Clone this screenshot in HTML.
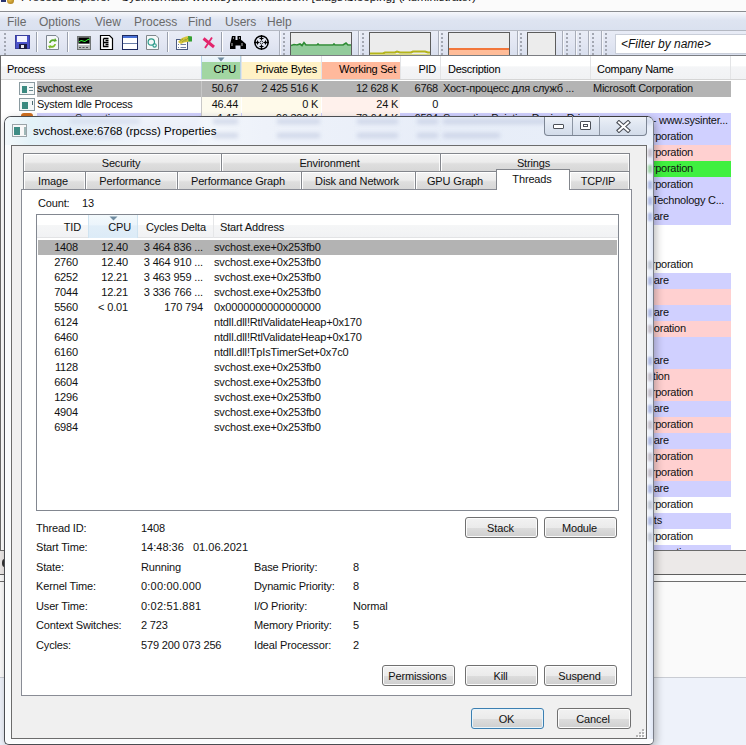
<!DOCTYPE html>
<html><head><meta charset="utf-8">
<style>
*{margin:0;padding:0;box-sizing:border-box}
html,body{width:746px;height:745px;overflow:hidden;background:#fff;font-family:"Liberation Sans",sans-serif;color:#000}
.a{position:absolute}
.t{position:absolute;white-space:nowrap;line-height:1}
/* background window */
#titlestrip{left:0;top:0;width:746px;height:11px;background:#fbfbfb}
#menubar{left:0;top:12px;width:746px;height:18px;background:linear-gradient(#f6f7fb 0,#e8ecf6 25%,#dee4f1 45%,#dae1ef 100%)}
#menubar .t{font-size:12px;color:#6a6a6a;top:4px}
#toolbar{left:0;top:30px;width:746px;height:25px;background:linear-gradient(#e9ecf6 0,#e3e7f3 50%,#d9dfee 100%)}
.grip{position:absolute;width:2px;top:3px;height:23px;background:repeating-linear-gradient(#a3a7b2 0 2px,transparent 2px 4px)}
.bl{position:absolute;width:1px;top:1px;height:24px;background:#a9aeba;box-shadow:1px 0 0 #f6f7fb}
.sep{position:absolute;width:1px;top:2px;height:20px;background:#9aa0ad;box-shadow:1px 0 0 #fff}
.graph{position:absolute;top:2px;height:24px;border:1px solid #6d6d6d;background:#ececec;overflow:hidden}
#hdr{left:0;top:56px;width:746px;height:24px;background:linear-gradient(#fff 0,#fff 45%,#f4f5f7 46%,#f1f2f4 100%);border-bottom:1px solid #d5d5d5}
#hdr .t{font-size:11px;top:7.6px;letter-spacing:-0.25px}
.hd{position:absolute;top:0;width:1px;height:23px;background:#e3e4e6}
.row{position:absolute;left:1px;height:16px;width:730px}
.row .t{font-size:10.5px;top:3px}
.mt{font-size:11px;color:#111;letter-spacing:-0.25px;margin-top:-0.4px}

.dt{position:absolute;white-space:nowrap;line-height:1;font-size:11px;color:#111;letter-spacing:-0.15px}
.tab{position:absolute;border:1px solid #83868c;border-bottom:none;background:linear-gradient(#f4f4f4 0,#ececec 45%,#dedede 55%,#d6d6d6 100%);box-shadow:inset 1px 1px 0 #fff,inset -1px 0 0 #fafafa}
.tab .dt{top:4px;left:0;right:3px;text-align:center}
.btn{position:absolute;height:21px;border:1px solid #707070;border-radius:3px;background:linear-gradient(#f2f2f2 0,#ebebeb 50%,#dddddd 51%,#cfcfcf 100%);box-shadow:inset 0 0 0 1px #fcfcfc}
.btn .dt{top:5px;left:0;right:2px;text-align:center}
.lr{position:absolute;left:37px;width:581px;height:15px}
.lr .dt{top:2px}
</style></head><body>
<div class="a" style="left:0;top:0;width:746px;height:745px;background:#fff"></div>
<div id="titlestrip" class="a"></div><div class="a" style="left:1px;top:0;width:5px;height:2px;background:#2a3570"></div><div class="a" style="left:7px;top:-3px;width:7px;height:7px;border-radius:50%;background:radial-gradient(circle at 40% 40%,#e8c050,#a07010)"></div>
<div class="t" style="left:21px;top:-8px;font-size:11.8px;color:#111">Process Explorer - Sysinternals: www.sysinternals.com [diags\Sleeping] (Administrator)</div>
<div class="a" style="left:0;top:11px;width:746px;height:1px;background:#8a8c90"></div>
<div id="menubar" class="a">
 <div class="t" style="left:7px">File</div>
 <div class="t" style="left:39px">Options</div>
 <div class="t" style="left:95px">View</div>
 <div class="t" style="left:134px">Process</div>
 <div class="t" style="left:188px">Find</div>
 <div class="t" style="left:225px">Users</div>
 <div class="t" style="left:267px">Help</div>
</div>
<div id="toolbar" class="a">
 <div class="grip" style="left:4px"></div>
 <div class="sep" style="left:36px"></div>
 <div class="sep" style="left:67px"></div>
 <div class="sep" style="left:167px"></div>
 <div class="sep" style="left:221px"></div>
 <div class="bl" style="left:279px"></div><div class="grip" style="left:283px"></div>
 <div class="graph" style="left:290px;width:62px;border-color:#5c5c5c"><svg class="a" style="left:0;top:0" width="60" height="22"><path d="M0 13 L3 12 L6 12.5 L9 11.5 L11 13 L13 10 L15 12.5 L26 12.5 L27 11.5 L28 12.5 L42 12.5 L43 11.5 L44 12.5 L52 12.5 L55 10.5 L57 12.5 L60 12.5 V22 H0 Z" fill="#93cb9b"/><path d="M0 12.5 L3 11.5 L6 12 L9 11 L11 12.5 L13 9.5 L15 12 L26 12 L27 11 L28 12 L42 12 L43 11 L44 12 L52 12 L55 10 L57 12 L60 12" fill="none" stroke="#2c8a32" stroke-width="1.6"/></svg></div>
 <div class="bl" style="left:358px"></div><div class="grip" style="left:362px"></div>
 <div class="graph" style="left:369px;width:62px;border-color:#5c5c5c"><svg class="a" style="left:0;top:0" width="60" height="22"><path d="M0 20.5 L13 20.5 L15 19.5 L25 19.5 L27 18.5 L30 19.5 L41 19.5 L43 18.5 L55 18.5 L58 19.5 L60 19.5" fill="none" stroke="#b4b41a" stroke-width="2"/><path d="M0 21.5 H60" stroke="#d8d880" stroke-width="1"/></svg></div>
 <div class="bl" style="left:438px"></div><div class="grip" style="left:441px"></div>
 <div class="graph" style="left:448px;width:62px;border-color:#5c5c5c"><div class="a" style="left:0;top:15px;width:60px;height:2px;background:#f2763a"></div><div class="a" style="left:0;top:17px;width:60px;height:6px;background:#ffbc98"></div></div>
 <div class="bl" style="left:517px"></div><div class="grip" style="left:520px"></div>
 <div class="graph" style="left:527px;width:29px;border-color:#5c5c5c"></div>
 <div class="bl" style="left:562px"></div><div class="grip" style="left:566px"></div>
 <div class="bl" style="left:575px"></div><div class="grip" style="left:579px"></div>
 <div class="bl" style="left:588px"></div><div class="grip" style="left:592px"></div>
 <div class="bl" style="left:601px"></div><div class="grip" style="left:605px"></div>
 <div class="a" style="left:615px;top:4px;width:140px;height:20px;background:#fff;border:1px solid #c9ced9"></div>
 <div class="t" style="left:621px;top:8px;font-size:12px;font-style:italic;color:#111">&lt;Filter by name&gt;</div>
</div>
<svg class="a" style="left:0;top:30px" width="290" height="25" viewBox="0 30 290 25">
 <!-- floppy -->
 <rect x="15" y="35" width="15" height="14" fill="#4b52c9"/>
 <rect x="15.5" y="35.5" width="14" height="13" fill="none" stroke="#3a3f9a" stroke-width="1"/>
 <rect x="17" y="36" width="10" height="6" fill="#f4f4ff"/>
 <rect x="19" y="44" width="8" height="5" fill="#1c1c40"/>
 <rect x="21" y="45" width="3" height="3" fill="#e8e8f0"/>
 <!-- refresh page -->
 <path d="M46.5 35.5 H56 L58.5 38 V49.5 H46.5 Z" fill="#f6f8fa" stroke="#7d8590"/>
 <path d="M49 43 Q50 38.5 54.5 39.5 L55 38 L57 41 L53.5 42 L54 41 Q51.5 40.5 50.5 43 Z" fill="#57a82a"/>
 <path d="M56 44 Q55 48.5 50.5 47.5 L50 49 L48 46 L51.5 45 L51 46 Q53.5 46.5 54.5 44 Z" fill="#7cbc2a"/>
 <!-- cpu monitor -->
 <rect x="77.5" y="36.5" width="13" height="13" fill="#b8bcbc" stroke="#707474"/>
 <rect x="78.5" y="37.5" width="11" height="6" fill="#000"/>
 <path d="M79 42 Q81 39.5 83 41 T87 40 L89.5 39" fill="none" stroke="#30ff30" stroke-width="1"/>
 <rect x="78.5" y="44" width="11" height="1" fill="#fff"/>
 <path d="M79 47.5 H81 M82.5 47.5 H84.5 M86 47.5 H88" stroke="#555" stroke-width="1"/>
 <!-- doc tree -->
 <path d="M100.5 35.5 H109.5 L112.5 38.5 V49.5 H100.5 Z" fill="#fff" stroke="#000" stroke-width="1.2"/>
 <path d="M103.5 38.5 H108.5 M103.5 38.5 V46.5 H108.5 M103.5 42.5 H108.5 M105.5 40.5 H108.5 M105.5 44.5 H108.5" fill="none" stroke="#000" stroke-width="1.3"/>
 <!-- window -->
 <rect x="122.5" y="35.5" width="15" height="14" fill="#fff" stroke="#1e2a60"/>
 <rect x="123" y="36" width="14" height="2" fill="#4a72d8"/>
 <path d="M123 43.5 H137" stroke="#6a7ea8" stroke-width="1"/>
 <!-- dll page -->
 <path d="M146.5 35.5 H156 L158.5 38 V49.5 H146.5 Z" fill="#f6f8f8" stroke="#80868c"/>
 <circle cx="151.3" cy="42" r="3.2" fill="none" stroke="#2b9a8a" stroke-width="1.2"/>
 <circle cx="154.6" cy="45.4" r="1.7" fill="none" stroke="#2b9a8a" stroke-width="1.1"/>
 <!-- properties -->
 <rect x="176.5" y="39.5" width="11" height="10" fill="#fdfdfd" stroke="#4a5a80"/>
 <path d="M178 44.5 H179 M180.5 44.5 H186 M178 47.5 H179 M180.5 47.5 H186" stroke="#7080a0" stroke-width="1"/>
 <path d="M178 42 L182 38 L186 36.5 L189 36 L191.5 37 L191 41 L187 42 L184 42.5 L181 44 Z" fill="#d6c43a"/>
 <path d="M180 41 L183 39 M182 42 L186 39 M185 41.5 L188 38" stroke="#8a9a30" stroke-width="0.8"/>
 <path d="M188 36 L192 36.5 L192 41.5 L188.5 41.5 Z" fill="#34a034"/>
 <!-- kill -->
 <path d="M203.5 38.5 L214 47" stroke="#e3246c" stroke-width="3"/>
 <path d="M212 37.5 L205 48" stroke="#e3246c" stroke-width="1.8"/>
 <!-- binoculars -->
 <path d="M232 36 H235.5 V40 H237.5 V36 H241 V40 L242 40.5 L246 44 V49 H240.5 V45.5 H235.5 V49 H230 V44 L231 40.5 Z" fill="#000"/>
 <rect x="231.5" y="43" width="1" height="3" fill="#bbb"/><rect x="241.5" y="43" width="1" height="3" fill="#bbb"/><rect x="233" y="37" width="1" height="2" fill="#888"/><rect x="239" y="37" width="1" height="2" fill="#888"/>
 <!-- crosshair -->
 <circle cx="261.5" cy="42.5" r="6.6" fill="none" stroke="#000" stroke-width="1.5"/>
 <path d="M261.5 35 V40 M261.5 45 V50 M254 42.5 H259 M264 42.5 H269" stroke="#000" stroke-width="1.3"/>
 <path d="M259.5 38.5 H263.5 M259.5 46.5 H263.5 M257.5 40.5 V44.5 M265.5 40.5 V44.5" stroke="#000" stroke-width="1"/>
 <rect x="260.2" y="41.2" width="2.6" height="2.6" fill="none" stroke="#000" stroke-width="0.8" transform="rotate(45 261.5 42.5)"/>
</svg>
<div class="a" style="left:0;top:55px;width:746px;height:1px;background:#7b7d82"></div><div class="a" style="left:0;top:30px;width:746px;height:1px;background:#b4b8c2"></div>
<div id="hdr" class="a">
 <div class="a" style="left:202px;top:6px;width:38px;height:17px;background:#a2d6a2"></div>
 <div class="a" style="left:201px;top:0;width:1px;height:23px;background:#b5d3e6"></div>
 <div class="a" style="left:240px;top:0;width:1px;height:23px;background:#b5d3e6"></div>
 <div class="a" style="left:202px;top:0;width:38px;height:6px;background:linear-gradient(#f2f8fc,#e6f2fa)"></div>
 <svg class="a" style="left:217px;top:1px" width="8" height="5"><path d="M0.5 0.5 L7.5 0.5 L4 4.5 Z" fill="#6f8ba0"/></svg>
 <div class="a" style="left:242px;top:6px;width:79px;height:17px;background:#fff2c6"></div>
 <div class="a" style="left:322px;top:6px;width:78px;height:17px;background:#ffb99c"></div>
 <div class="hd" style="left:241px"></div>
 <div class="hd" style="left:321px"></div>
 <div class="hd" style="left:400px"></div>
 <div class="hd" style="left:440px"></div>
 <div class="hd" style="left:590px"></div>
 <div class="hd" style="left:730px"></div>
 <div class="t" style="left:7px">Process</div>
 <div class="t" style="right:510px">CPU</div>
 <div class="t" style="right:429px">Private Bytes</div>
 <div class="t" style="right:350px">Working Set</div>
 <div class="t" style="right:310px">PID</div>
 <div class="t" style="left:448px">Description</div>
 <div class="t" style="left:597px">Company Name</div>
</div>

<div id="rows"><div class="a" style="left:37px;top:81px;width:694px;height:16px;background:#b4b4b4"></div><div class="a" style="left:37px;top:113px;width:694px;height:16px;background:#d0d0ff"></div><div class="a" style="left:37px;top:129px;width:694px;height:16px;background:#d0d0ff"></div><div class="a" style="left:37px;top:145px;width:694px;height:16px;background:#ffd0d0"></div><div class="a" style="left:37px;top:161px;width:694px;height:16px;background:#40f040"></div><div class="a" style="left:37px;top:177px;width:694px;height:16px;background:#d0d0ff"></div><div class="a" style="left:37px;top:193px;width:694px;height:16px;background:#d0d0ff"></div><div class="a" style="left:37px;top:209px;width:694px;height:16px;background:#d0d0ff"></div><div class="a" style="left:37px;top:273px;width:694px;height:16px;background:#d0d0ff"></div><div class="a" style="left:37px;top:289px;width:694px;height:16px;background:#ffd0d0"></div><div class="a" style="left:37px;top:305px;width:694px;height:16px;background:#d0d0ff"></div><div class="a" style="left:37px;top:321px;width:694px;height:16px;background:#ffd0d0"></div><div class="a" style="left:37px;top:337px;width:694px;height:16px;background:#d0d0ff"></div><div class="a" style="left:37px;top:353px;width:694px;height:16px;background:#d0d0ff"></div><div class="a" style="left:37px;top:369px;width:694px;height:16px;background:#ffd0d0"></div><div class="a" style="left:37px;top:385px;width:694px;height:16px;background:#ffd0d0"></div><div class="a" style="left:37px;top:401px;width:694px;height:16px;background:#d0d0ff"></div><div class="a" style="left:37px;top:417px;width:694px;height:16px;background:#ffd0d0"></div><div class="a" style="left:37px;top:433px;width:694px;height:16px;background:#d0d0ff"></div><div class="a" style="left:37px;top:449px;width:694px;height:16px;background:#ffd0d0"></div><div class="a" style="left:37px;top:465px;width:694px;height:16px;background:#ffd0d0"></div><div class="a" style="left:37px;top:481px;width:694px;height:16px;background:#d0d0ff"></div><div class="a" style="left:37px;top:513px;width:694px;height:16px;background:#d0d0ff"></div><div class="a" style="left:37px;top:545px;width:694px;height:5px;background:#d0d0ff"></div>
<div class="a" style="left:202px;top:97px;width:39px;height:16px;background:#fdfbee"></div>
<div class="a" style="left:242px;top:97px;width:79px;height:16px;background:#fffaea"></div>
<div class="a" style="left:322px;top:97px;width:78px;height:16px;background:#fff1ec"></div>
<div class="a" style="left:202px;top:113px;width:39px;height:4px;background:#fbfaf2"></div><div class="a" style="left:242px;top:113px;width:79px;height:4px;background:#fffaf0"></div><div class="a" style="left:322px;top:113px;width:78px;height:4px;background:#fff4f0"></div><div class="a" style="left:201px;top:81px;width:1px;height:469px;background:#c8c8c8"></div>

<div class="a" style="left:19px;top:82px;width:16px;height:13px;border:1px solid #8a9aa0;background:#f4f8f8"><div class="a" style="left:2px;top:3px;width:5px;height:7px;background:#3a8a80"></div><div class="a" style="left:9px;top:4px;width:4px;height:1px;background:#6a8a90"></div><div class="a" style="left:9px;top:7px;width:4px;height:1px;background:#6a8a90"></div></div>
<div class="a" style="left:19px;top:98px;width:16px;height:13px;border:1px solid #8a9aa0;background:#f4f8f8"><div class="a" style="left:2px;top:3px;width:6px;height:7px;background:#3a8a80"></div><div class="a" style="left:12px;top:2px;width:1px;height:4px;background:#4a6a70"></div></div>
<div class="t mt" style="left:37px;top:83px">svchost.exe</div><div class="t mt" style="right:508px;top:83px">50.67</div><div class="t mt" style="right:428px;top:83px">2 425 516 K</div><div class="t mt" style="right:348px;top:83px">12 628 K</div><div class="t mt" style="right:308px;top:83px">6768</div><div class="t mt" style="left:443px;top:83px">Хост-процесс для служб ...</div><div class="t mt" style="left:593px;top:83px">Microsoft Corporation</div><div class="t mt" style="left:37px;top:99px">System Idle Process</div><div class="t mt" style="right:508px;top:99px">46.44</div><div class="t mt" style="right:428px;top:99px">0 K</div><div class="t mt" style="right:348px;top:99px">24 K</div><div class="t mt" style="right:308px;top:99px">0</div><div class="t mt" style="left:593px;top:115px">Sysinternals - www.sysinter...</div><div class="t mt" style="left:593px;top:131px">Microsoft Corporation</div><div class="t mt" style="left:593px;top:147px">Microsoft Corporation</div><div class="t mt" style="left:593px;top:163px">Microsoft Corporation</div><div class="t mt" style="left:593px;top:179px">Microsoft Corporation</div><div class="t mt" style="left:652px;top:195px">Technology C...</div><div class="t mt" style="left:646px;top:211px">ware</div><div class="t mt" style="left:593px;top:259px">Microsoft Corporation</div><div class="t mt" style="left:646px;top:275px">ware</div><div class="t mt" style="left:646px;top:307px">ware</div><div class="t mt" style="left:648px;top:323px">poration</div><div class="t mt" style="left:646px;top:355px">ware</div><div class="t mt" style="left:647px;top:371px">ation</div><div class="t mt" style="left:593px;top:387px">Microsoft Corporation</div><div class="t mt" style="left:646px;top:403px">ware</div><div class="t mt" style="left:593px;top:419px">Microsoft Corporation</div><div class="t mt" style="left:646px;top:435px">ware</div><div class="t mt" style="left:593px;top:451px">Microsoft Corporation</div><div class="t mt" style="left:593px;top:467px">Microsoft Corporation</div><div class="t mt" style="left:646px;top:483px">ware</div><div class="t mt" style="left:593px;top:499px">Microsoft Corporation</div><div class="t mt" style="left:648px;top:515px">nts</div><div class="t mt" style="left:593px;top:531px">Microsoft Corporation</div><div class="t mt" style="left:593px;top:547px">Microsoft Corporation</div><div class="t mt" style="left:75px;top:113.5px">Synaptics</div><div class="t mt" style="right:508px;top:113.5px">1.15</div><div class="t mt" style="right:428px;top:113.5px">96 392 K</div><div class="t mt" style="right:348px;top:113.5px">73 644 K</div><div class="t mt" style="right:308px;top:113.5px">6584</div><div class="t mt" style="left:443px;top:113.5px">Synaptics Pointing Device Driver</div><div class="a" style="left:21px;top:113px;width:12px;height:4px;background:#d07020;border-radius:3px 3px 0 0"></div></div>

<div id="bgbottom">
<div class="a" style="left:0;top:550px;width:746px;height:1px;background:#6b6b6b"></div>
<div class="a" style="left:0;top:551px;width:746px;height:23px;background:#ece9e8"></div>
<div class="a" style="left:0;top:574px;width:746px;height:1px;background:#5e5e5e"></div>
<div class="a" style="left:0;top:575px;width:746px;height:6px;background:#fbfbfb"></div>
<div class="a" style="left:0;top:581px;width:746px;height:1px;background:#6e6e6e"></div>
<div class="a" style="left:0;top:582px;width:746px;height:95px;background:#fafafa"></div>
<div class="a" style="left:0;top:677px;width:746px;height:1px;background:#c9ccd3"></div>
<div class="a" style="left:0;top:678px;width:746px;height:67px;background:#eef2fa"></div>
<div class="a" style="left:0;top:56px;width:1px;height:494px;background:#6a6a6a"></div><div class="a" style="left:2px;top:559px;width:5px;height:8px;border-radius:50%;background:#333"></div>
</div>

<div id="dialog">
 <div class="a" style="left:4px;top:116px;width:650px;height:629px;border-radius:7px;box-shadow:2px 3px 9px rgba(0,0,0,.28)"></div>
 <div class="a" style="left:4px;top:116px;width:650px;height:629px;border:1px solid #4a4d52;border-right-color:#7a7e88;border-radius:7px 7px 5px 5px;background:#fafcfd;box-shadow:inset 1px 1px 0 #fff,inset -1px -1px 0 #fff"></div><div class="a" style="left:5px;top:117px;width:648px;height:28px;border-radius:6px 6px 0 0;background:linear-gradient(90deg,#f4f9fb 0,#e3f2f8 4%,#f6fafc 22%,#eef2fa 40%,#e7edf8 70%,#e9eff9 100%)"></div>
 <div class="a" style="left:213px;top:119px;width:25px;height:5px;background:#b8c2dc;filter:blur(2px);opacity:.55"></div><div class="a" style="left:277px;top:119px;width:43px;height:5px;background:#b8c2dc;filter:blur(2px);opacity:.55"></div><div class="a" style="left:357px;top:119px;width:41px;height:5px;background:#b8c2dc;filter:blur(2px);opacity:.55"></div><div class="a" style="left:417px;top:119px;width:21px;height:5px;background:#b8c2dc;filter:blur(2px);opacity:.55"></div><div class="a" style="left:443px;top:119px;width:117px;height:5px;background:#b8c2dc;filter:blur(2px);opacity:.55"></div><div class="a" style="left:593px;top:119px;width:60px;height:5px;background:#b8c2dc;filter:blur(2px);opacity:.55"></div><div class="a" style="left:213px;top:133px;width:25px;height:5px;background:#b8c2dc;filter:blur(2px);opacity:.55"></div><div class="a" style="left:277px;top:133px;width:43px;height:5px;background:#b8c2dc;filter:blur(2px);opacity:.55"></div><div class="a" style="left:357px;top:133px;width:41px;height:5px;background:#b8c2dc;filter:blur(2px);opacity:.55"></div><div class="a" style="left:417px;top:133px;width:21px;height:5px;background:#b8c2dc;filter:blur(2px);opacity:.55"></div><div class="a" style="left:443px;top:133px;width:57px;height:5px;background:#b8c2dc;filter:blur(2px);opacity:.55"></div><div class="a" style="left:70px;top:119px;width:70px;height:5px;background:#b8c2dc;filter:blur(2px);opacity:.5"></div><div class="a" style="left:70px;top:133px;width:50px;height:5px;background:#b8c2dc;filter:blur(2px);opacity:.5"></div><div class="a" style="left:40px;top:117px;width:160px;height:26px;background:#dfe3f6;filter:blur(3px);opacity:.35"></div><div class="a" style="left:12px;top:124px;width:15px;height:13px;border:1px solid #9aa4a8;background:#f8f8f8"><div class="a" style="left:1px;top:2px;width:6px;height:8px;background:#3f8d85"></div><div class="a" style="left:11px;top:2px;width:2px;height:8px;background:#9fb8b8"></div></div>
 <div class="t" style="left:33px;top:126px;font-size:11.5px;color:#000">svchost.exe:6768 (rpcss) Properties</div>
 <div class="a" style="left:544px;top:116px;width:103px;height:20px;border:1px solid #7c8594;border-top:none;border-radius:0 0 4px 4px;background:linear-gradient(#eef2f8 0,#dfe6f1 50%,#d3dcea 100%)"></div><div class="a" style="left:540px;top:116px;width:108px;height:1px;background:#3d3d3d"></div>
 <div class="a" style="left:572px;top:116px;width:1px;height:19px;background:#8b94a2"></div>
 <div class="a" style="left:599px;top:116px;width:1px;height:19px;background:#8b94a2"></div>
 <div class="a" style="left:553px;top:124px;width:11px;height:5px;border:1px solid #4c5058;background:#fff;border-radius:1px"></div>
 <div class="a" style="left:580px;top:121px;width:11px;height:9px;border:1px solid #4c5058;background:#fff;border-radius:1px"><div class="a" style="left:2px;top:2px;width:5px;height:3px;border:1px solid #4c5058"></div></div>
 <svg class="a" style="left:616px;top:120px" width="15" height="13"><path d="M3 2.5 L12 10.5 M12 2.5 L3 10.5" stroke="#4c5058" stroke-width="4.2" stroke-linecap="square"/><path d="M3 2.5 L12 10.5 M12 2.5 L3 10.5" stroke="#fff" stroke-width="2" stroke-linecap="square"/></svg>
 <div class="a" style="left:647px;top:145px;width:6px;height:594px;background:linear-gradient(90deg,#f6f8fc,#e8eef9 60%,#dfe6f4)"></div><div class="a" style="left:648px;top:149px;width:4px;height:8px;background:#a89aa6;filter:blur(1.2px);opacity:.55"></div><div class="a" style="left:648px;top:165px;width:4px;height:8px;background:#60c060;filter:blur(1.2px);opacity:.55"></div><div class="a" style="left:648px;top:181px;width:4px;height:8px;background:#7d8fd6;filter:blur(1.2px);opacity:.55"></div><div class="a" style="left:648px;top:197px;width:4px;height:8px;background:#7d8fd6;filter:blur(1.2px);opacity:.55"></div><div class="a" style="left:648px;top:213px;width:4px;height:8px;background:#7d8fd6;filter:blur(1.2px);opacity:.55"></div><div class="a" style="left:648px;top:261px;width:4px;height:8px;background:#a0a8b8;filter:blur(1.2px);opacity:.55"></div><div class="a" style="left:648px;top:277px;width:4px;height:8px;background:#7d8fd6;filter:blur(1.2px);opacity:.55"></div><div class="a" style="left:648px;top:309px;width:4px;height:8px;background:#7d8fd6;filter:blur(1.2px);opacity:.55"></div><div class="a" style="left:648px;top:325px;width:4px;height:8px;background:#a89aa6;filter:blur(1.2px);opacity:.55"></div><div class="a" style="left:648px;top:357px;width:4px;height:8px;background:#7d8fd6;filter:blur(1.2px);opacity:.55"></div><div class="a" style="left:648px;top:373px;width:4px;height:8px;background:#a89aa6;filter:blur(1.2px);opacity:.55"></div><div class="a" style="left:648px;top:389px;width:4px;height:8px;background:#a89aa6;filter:blur(1.2px);opacity:.55"></div><div class="a" style="left:648px;top:405px;width:4px;height:8px;background:#7d8fd6;filter:blur(1.2px);opacity:.55"></div><div class="a" style="left:648px;top:421px;width:4px;height:8px;background:#a89aa6;filter:blur(1.2px);opacity:.55"></div><div class="a" style="left:648px;top:437px;width:4px;height:8px;background:#7d8fd6;filter:blur(1.2px);opacity:.55"></div><div class="a" style="left:648px;top:453px;width:4px;height:8px;background:#a89aa6;filter:blur(1.2px);opacity:.55"></div><div class="a" style="left:648px;top:469px;width:4px;height:8px;background:#a89aa6;filter:blur(1.2px);opacity:.55"></div><div class="a" style="left:648px;top:485px;width:4px;height:8px;background:#7d8fd6;filter:blur(1.2px);opacity:.55"></div><div class="a" style="left:648px;top:501px;width:4px;height:8px;background:#a0a8b8;filter:blur(1.2px);opacity:.55"></div><div class="a" style="left:648px;top:517px;width:4px;height:8px;background:#7d8fd6;filter:blur(1.2px);opacity:.55"></div><div class="a" style="left:648px;top:533px;width:4px;height:8px;background:#a0a8b8;filter:blur(1.2px);opacity:.55"></div><!-- client area -->
 <div class="a" style="left:11px;top:145px;width:636px;height:594px;border:1px solid #6c6c6c;background:#f0f0f0"></div>
 <!-- tabs row 1 -->
 <div class="tab" style="left:23px;top:153px;width:199px;height:19px"><div class="dt">Security</div></div>
 <div class="tab" style="left:221px;top:153px;width:220px;height:19px"><div class="dt">Environment</div></div>
 <div class="tab" style="left:440px;top:153px;width:190px;height:19px"><div class="dt">Strings</div></div>
 <div class="a" style="left:23px;top:171px;width:607px;height:1px;background:#83868c"></div>
 <!-- tabs row 2 -->
 <div class="tab" style="left:23px;top:171px;width:63px;height:19px"><div class="dt">Image</div></div>
 <div class="tab" style="left:85px;top:171px;width:93px;height:19px"><div class="dt">Performance</div></div>
 <div class="tab" style="left:177px;top:171px;width:125px;height:19px"><div class="dt">Performance Graph</div></div>
 <div class="tab" style="left:301px;top:171px;width:115px;height:19px"><div class="dt">Disk and Network</div></div>
 <div class="tab" style="left:415px;top:171px;width:83px;height:19px"><div class="dt">GPU Graph</div></div>
 <div class="tab" style="left:569px;top:171px;width:61px;height:19px"><div class="dt">TCP/IP</div></div>
 <!-- panel -->
 <div class="a" style="left:21px;top:189px;width:611px;height:507px;border:1px solid #898c95;background:#fff"></div>
 <div class="a" style="left:496px;top:169px;width:74px;height:21px;border:1px solid #83868c;border-bottom:none;background:#fff"><div class="dt" style="top:4px;left:0;right:2px;text-align:center">Threads</div></div>
 <div class="dt" style="left:38px;top:198px">Count:</div>
 <div class="dt" style="left:82px;top:198px">13</div>
 <!-- listview -->
 <div class="a" style="left:36px;top:214px;width:583px;height:297px;border:1px solid #828790;background:#fff"></div>
 <div class="a" style="left:37px;top:215px;width:581px;height:23px;background:linear-gradient(#fff 0,#fff 45%,#f5f6f7 46%,#f1f2f4 100%);border-bottom:1px solid #e2e3e5"></div>
 <div class="a" style="left:88px;top:215px;width:50px;height:23px;background:linear-gradient(#f3f9fc 0,#ebf4fb 45%,#e1eef8 46%,#dcebf7 100%)"></div>
 <div class="a" style="left:88px;top:215px;width:1px;height:23px;background:#cfe3f0"></div>
 <div class="a" style="left:137px;top:215px;width:1px;height:23px;background:#cfe3f0"></div>
 <div class="a" style="left:213px;top:215px;width:1px;height:23px;background:#e5e6e8"></div>
 <svg class="a" style="left:109px;top:216px" width="9" height="5"><path d="M0.5 0.5 L8.5 0.5 L4.5 4.5 Z" fill="#6f8ba0"/></svg>
 <div class="dt" style="right:665px;top:222px">TID</div>
 <div class="dt" style="right:615px;top:222px">CPU</div>
 <div class="dt" style="right:540px;top:222px">Cycles Delta</div>
 <div class="dt" style="left:220px;top:222px">Start Address</div>
 <div class="a" style="left:38px;top:240px;width:579px;height:15px;background:#b3b3b3"></div><div class="dt" style="right:668px;top:242px">1408</div><div class="dt" style="right:618px;top:242px">12.40</div><div class="dt" style="right:543px;top:242px">3 464 836 ...</div><div class="dt" style="left:214px;top:242px">svchost.exe+0x253fb0</div><div class="dt" style="right:668px;top:257px">2760</div><div class="dt" style="right:618px;top:257px">12.40</div><div class="dt" style="right:543px;top:257px">3 464 910 ...</div><div class="dt" style="left:214px;top:257px">svchost.exe+0x253fb0</div><div class="dt" style="right:668px;top:272px">6252</div><div class="dt" style="right:618px;top:272px">12.21</div><div class="dt" style="right:543px;top:272px">3 463 959 ...</div><div class="dt" style="left:214px;top:272px">svchost.exe+0x253fb0</div><div class="dt" style="right:668px;top:287px">7044</div><div class="dt" style="right:618px;top:287px">12.21</div><div class="dt" style="right:543px;top:287px">3 336 766 ...</div><div class="dt" style="left:214px;top:287px">svchost.exe+0x253fb0</div><div class="dt" style="right:668px;top:302px">5560</div><div class="dt" style="right:618px;top:302px">&lt; 0.01</div><div class="dt" style="right:543px;top:302px">170 794</div><div class="dt" style="left:214px;top:302px">0x0000000000000000</div><div class="dt" style="right:668px;top:317px">6124</div><div class="dt" style="left:214px;top:317px">ntdll.dll!RtlValidateHeap+0x170</div><div class="dt" style="right:668px;top:332px">6460</div><div class="dt" style="left:214px;top:332px">ntdll.dll!RtlValidateHeap+0x170</div><div class="dt" style="right:668px;top:347px">6160</div><div class="dt" style="left:214px;top:347px">ntdll.dll!TpIsTimerSet+0x7c0</div><div class="dt" style="right:668px;top:362px">1128</div><div class="dt" style="left:214px;top:362px">svchost.exe+0x253fb0</div><div class="dt" style="right:668px;top:377px">6604</div><div class="dt" style="left:214px;top:377px">svchost.exe+0x253fb0</div><div class="dt" style="right:668px;top:392px">1296</div><div class="dt" style="left:214px;top:392px">svchost.exe+0x253fb0</div><div class="dt" style="right:668px;top:407px">4904</div><div class="dt" style="left:214px;top:407px">svchost.exe+0x253fb0</div><div class="dt" style="right:668px;top:422px">6984</div><div class="dt" style="left:214px;top:422px">svchost.exe+0x253fb0</div>
 <!-- buttons -->
 <div class="btn" style="left:465px;top:517px;width:73px"><div class="dt">Stack</div></div>
 <div class="btn" style="left:544px;top:517px;width:73px"><div class="dt">Module</div></div>
 <div class="dt" style="left:36px;top:523px">Thread ID:</div><div class="dt" style="left:141px;top:523px">1408</div><div class="dt" style="left:36px;top:542px">Start Time:</div><div class="dt" style="left:141px;letter-spacing:0px;top:542px">14:48:36&nbsp;&nbsp;&nbsp;01.06.2021</div><div class="dt" style="left:36px;top:562px">State:</div><div class="dt" style="left:141px;top:562px">Running</div><div class="dt" style="left:36px;top:581px">Kernel Time:</div><div class="dt" style="left:141px;letter-spacing:0.2px;top:581px">0:00:00.000</div><div class="dt" style="left:36px;top:601px">User Time:</div><div class="dt" style="left:141px;letter-spacing:0.2px;top:601px">0:02:51.881</div><div class="dt" style="left:36px;top:620px">Context Switches:</div><div class="dt" style="left:141px;top:620px">2 723</div><div class="dt" style="left:36px;top:640px">Cycles:</div><div class="dt" style="left:141px;top:640px">579 200 073 256</div><div class="dt" style="left:254px;top:562px">Base Priority:</div><div class="dt" style="left:353px;top:562px">8</div><div class="dt" style="left:254px;top:581px">Dynamic Priority:</div><div class="dt" style="left:353px;top:581px">8</div><div class="dt" style="left:254px;top:601px">I/O Priority:</div><div class="dt" style="left:353px;top:601px">Normal</div><div class="dt" style="left:254px;top:620px">Memory Priority:</div><div class="dt" style="left:353px;top:620px">5</div><div class="dt" style="left:254px;top:640px">Ideal Processor:</div><div class="dt" style="left:353px;top:640px">2</div>
 <div class="btn" style="left:382px;top:665px;width:73px"><div class="dt">Permissions</div></div>
 <div class="btn" style="left:465px;top:665px;width:73px"><div class="dt">Kill</div></div>
 <div class="btn" style="left:544px;top:665px;width:73px"><div class="dt">Suspend</div></div>
 <div class="btn" style="left:471px;top:708px;width:73px;border-color:#3c7fb1;box-shadow:inset 0 0 0 1px #e8f4fb"><div class="dt">OK</div></div>
 <div class="btn" style="left:557px;top:708px;width:74px"><div class="dt">Cancel</div></div>
<div class="a" style="left:642px;top:729px;width:2px;height:2px;background:#b4b4b4;box-shadow:1px 1px 0 #fff"></div><div class="a" style="left:642px;top:732px;width:2px;height:2px;background:#b4b4b4;box-shadow:1px 1px 0 #fff"></div><div class="a" style="left:639px;top:732px;width:2px;height:2px;background:#b4b4b4;box-shadow:1px 1px 0 #fff"></div><div class="a" style="left:642px;top:735px;width:2px;height:2px;background:#b4b4b4;box-shadow:1px 1px 0 #fff"></div><div class="a" style="left:639px;top:735px;width:2px;height:2px;background:#b4b4b4;box-shadow:1px 1px 0 #fff"></div><div class="a" style="left:636px;top:735px;width:2px;height:2px;background:#b4b4b4;box-shadow:1px 1px 0 #fff"></div></div>
</body></html>
